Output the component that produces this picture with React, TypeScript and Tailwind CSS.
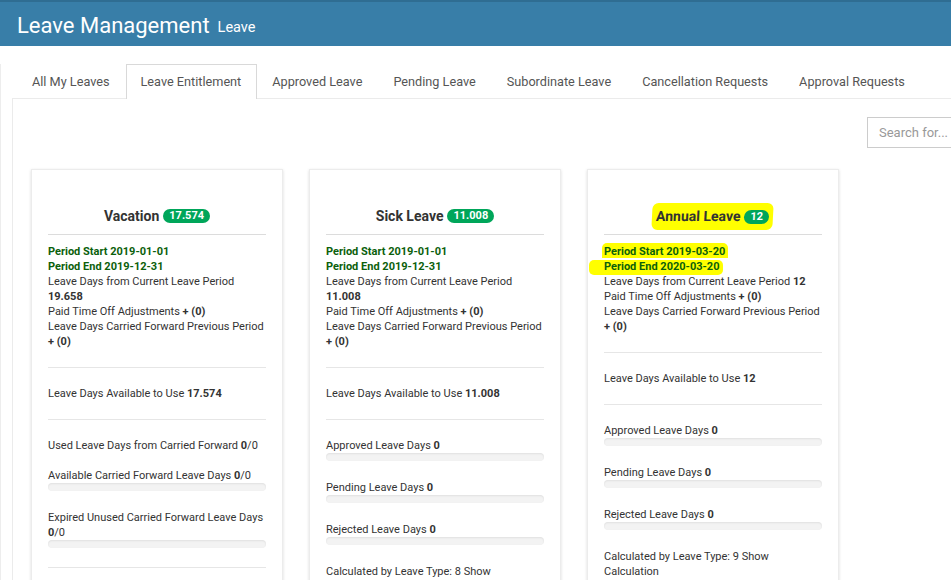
import React from 'react';

type Item = { label: string; value?: string; rest?: string; bar?: boolean; tight?: boolean };

type Card = {
  title: string;
  badge: string;
  start: string;
  end: string;
  current: string;
  available: string;
  highlight?: boolean;
  groups: Item[][];
};

const cards: Card[] = [
  {
    title: 'Vacation',
    badge: '17.574',
    start: '2019-01-01',
    end: '2019-12-31',
    current: '19.658',
    available: '17.574',
    groups: [
      [
        { label: 'Used Leave Days from Carried Forward', value: '0', rest: '/0', tight: true },
        { label: 'Available Carried Forward Leave Days', value: '0', rest: '/0', bar: true },
        { label: 'Expired Unused Carried Forward Leave Days', value: '0', rest: '/0', bar: true },
      ],
      [
        { label: 'Approved Leave Days', value: '0', bar: true },
        { label: 'Pending Leave Days', value: '0', bar: true },
        { label: 'Rejected Leave Days', value: '0', bar: true },
        { label: 'Calculated by Leave Type: 7 Show Calculation' },
      ],
    ],
  },
  {
    title: 'Sick Leave',
    badge: '11.008',
    start: '2019-01-01',
    end: '2019-12-31',
    current: '11.008',
    available: '11.008',
    groups: [
      [
        { label: 'Approved Leave Days', value: '0', bar: true },
        { label: 'Pending Leave Days', value: '0', bar: true },
        { label: 'Rejected Leave Days', value: '0', bar: true },
        { label: 'Calculated by Leave Type: 8 Show Calculation' },
      ],
    ],
  },
  {
    title: 'Annual Leave',
    badge: '12',
    start: '2019-03-20',
    end: '2020-03-20',
    current: '12',
    available: '12',
    highlight: true,
    groups: [
      [
        { label: 'Approved Leave Days', value: '0', bar: true },
        { label: 'Pending Leave Days', value: '0', bar: true },
        { label: 'Rejected Leave Days', value: '0', bar: true },
        { label: 'Calculated by Leave Type: 9 Show Calculation' },
      ],
    ],
  },
];

const tabs = ['All My Leaves', 'Leave Entitlement', 'Approved Leave', 'Pending Leave', 'Subordinate Leave', 'Cancellation Requests', 'Approval Requests'];

const Divider = () => <div className="h-px bg-[#e6e6e6]" />;

const Bar = () => <div className="h-[8px] rounded-[4px] bg-[#f3f3f3] shadow-[inset_0_1px_2px_rgba(0,0,0,0.08)]" />;

const LeaveCard: React.FC<{ card: Card }> = ({ card }) => {
  const hl = card.highlight;
  return (
    <div className="w-[252px] shrink-0 bg-white border border-[#ececec] shadow-[0_1px_3px_rgba(0,0,0,0.14)] px-[16px] pt-[37px] pb-[40px]">
      {/* title */}
      <div className="flex justify-center h-[18px] items-center">
        <span className={`flex items-center gap-[4px] ${hl ? 'bg-[#ffff00] px-[4px] py-[3px] rounded-[6px] -skew-x-3' : ''}`}>
          <span className="text-[14px] font-bold text-[#333]">{card.title}</span>
          <span className="rounded-full bg-[#00a65a] text-white text-[11px] font-bold leading-[14px] px-[6px]">{card.badge}</span>
        </span>
      </div>
      <div className="mt-[9px] h-px bg-[#dcdcdc]" />

      {/* period details */}
      <div className="pt-[9px] pb-[18px] text-[11px] leading-[15px] text-[#333]">
        <div className="font-bold text-[#0b600b]">
          <span className={hl ? 'bg-[#ffff00] -ml-[2px] pl-[2px] pr-[3px] pt-[2px] rounded-t-[5px]' : ''}>Period Start {card.start}</span>
        </div>
        <div className="font-bold text-[#0b600b]">
          <span className={hl ? 'bg-[#ffff00] -ml-[15px] pl-[15px] pr-[3px] pb-[2px] rounded-[5px]' : ''}>Period End {card.end}</span>
        </div>
        <div>
          Leave Days from Current Leave Period <b>{card.current}</b>
        </div>
        <div>
          Paid Time Off Adjustments <b>+ (0)</b>
        </div>
        <div>
          Leave Days Carried Forward Previous Period <b>+ (0)</b>
        </div>
      </div>
      <Divider />

      <div className="py-[18px] text-[11px] leading-[15px] text-[#333]">
        Leave Days Available to Use <b>{card.available}</b>
      </div>

      {card.groups.map((group, gi) => (
        <div key={gi}>
          <Divider />
          <div className="pt-[18px] text-[11px] leading-[15px] text-[#333]">
            {group.map((it, i) => (
              <div key={i} className={it.tight ? 'mb-[15px]' : 'mb-[19px]'}>
                <div>
                  {it.label}
                  {it.value !== undefined && (
                    <>
                      {' '}
                      <b>{it.value}</b>
                      {it.rest}
                    </>
                  )}
                </div>
                {it.bar && <Bar />}
              </div>
            ))}
          </div>
        </div>
      ))}
    </div>
  );
};

export default function App() {
  return (
    <div className="w-[951px] h-[580px] overflow-hidden bg-white font-['Roboto',sans-serif] text-[#333]">
      {/* header */}
      <div className="h-[46px] bg-[#387ea8] border-t-2 border-[#2f6d92] flex items-end pl-[17px] pb-[6px]">
        <span className="text-[22px] leading-[28px] text-white">Leave Management</span>
        <span className="ml-[8px] mb-[3px] text-[14.5px] leading-[18px] text-white">Leave</span>
      </div>

      <div className="mt-[18px] border-l border-[#ededed] w-[1100px]">
        {/* tabs */}
        <div className="flex pl-[16px]">
          {tabs.map((t) => {
            const active = t === 'Leave Entitlement';
            return (
              <div
                key={t}
                className={`pl-[14px] pr-[15px] pt-[7px] pb-[7px] text-[12.7px] leading-[19px] text-[#555] border border-b-0 ${active ? 'border-[#d9d9d9] bg-white relative z-10 -mb-px' : 'border-transparent'}`}
              >
                {t}
              </div>
            );
          })}
        </div>

        {/* pane */}
        <div className="ml-[11px] border-l border-t border-[#ebebeb] pl-[18px] pt-[18px]">
          <div className="flex pl-[836px]">
            <div className="w-[140px] h-[31px] border border-[#cccccc] px-[11px] flex items-center text-[13px] text-[#999]">Search for...</div>
          </div>
          <div className="flex gap-[26px] mt-[21px] items-start">
            {cards.map((c) => (
              <LeaveCard key={c.title} card={c} />
            ))}
          </div>
        </div>
      </div>
    </div>
  );
}
